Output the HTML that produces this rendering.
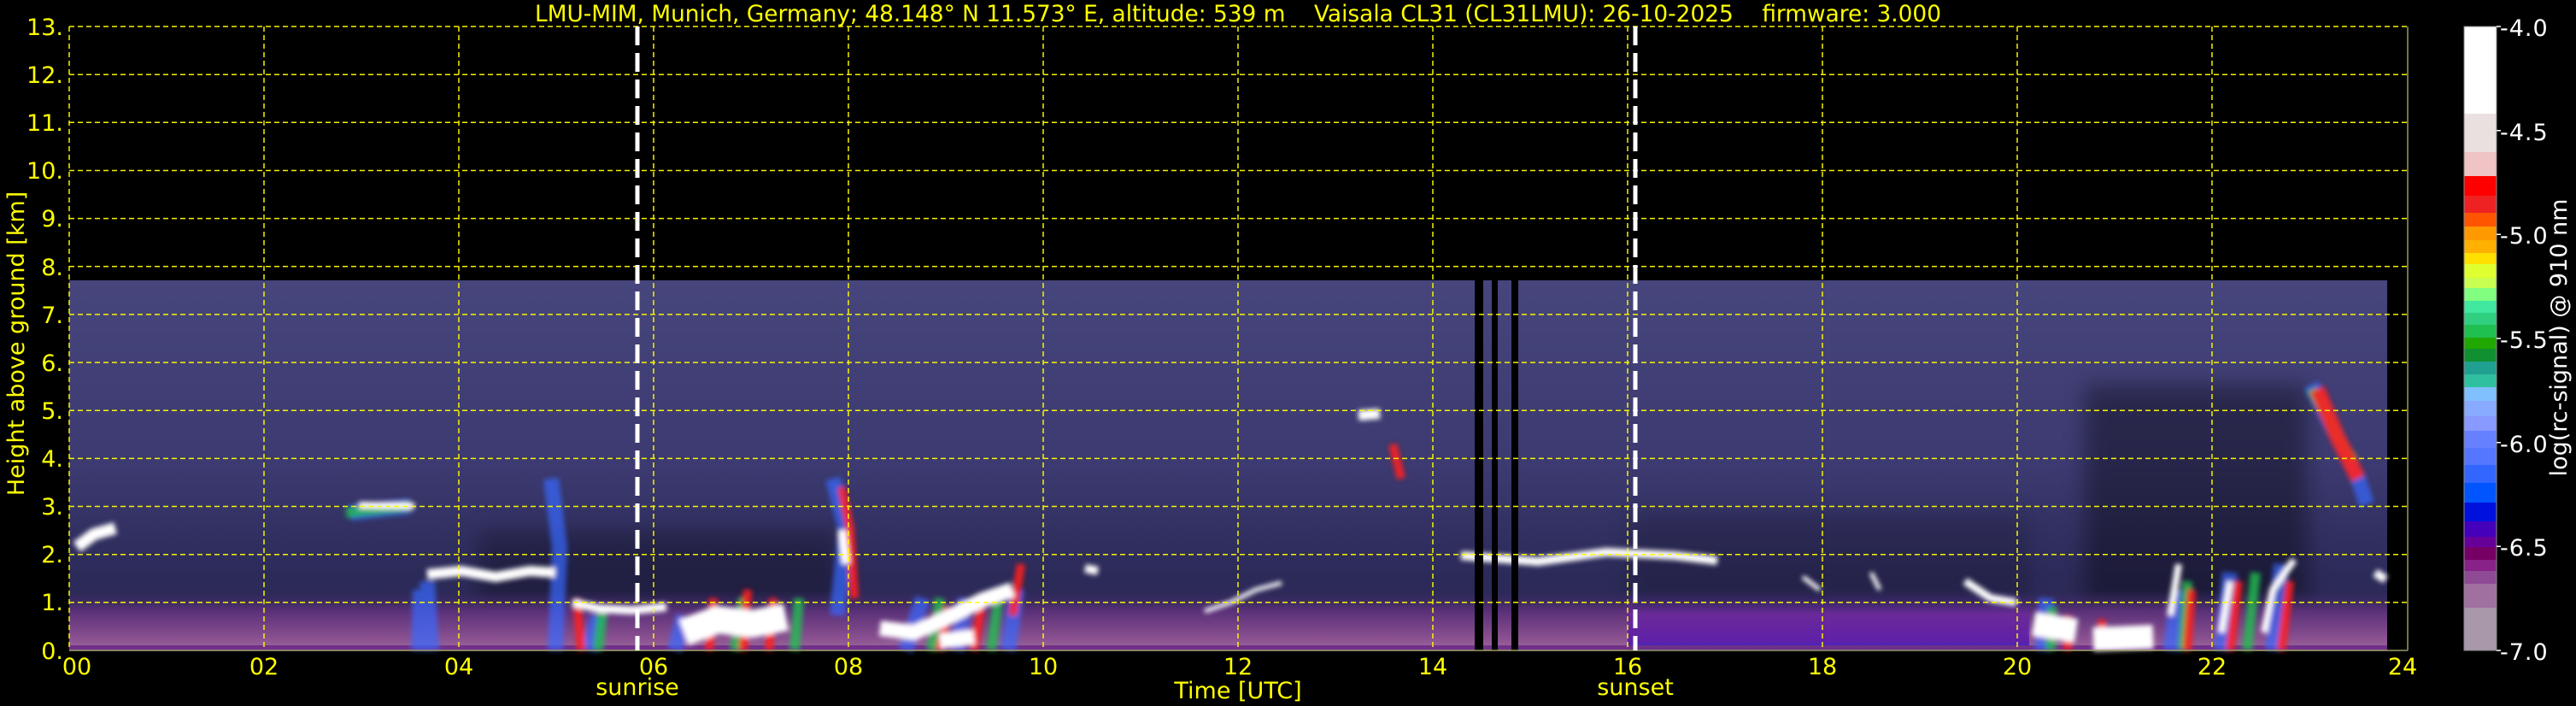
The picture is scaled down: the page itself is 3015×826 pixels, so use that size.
<!DOCTYPE html>
<html><head><meta charset="utf-8"><style>
html,body{margin:0;padding:0;background:#000;width:3015px;height:826px;overflow:hidden}
svg{display:block}
text{font-family:"DejaVu Sans","Liberation Sans",sans-serif}
</style></head><body>
<svg width="3015" height="826" viewBox="0 0 3015 826" xmlns="http://www.w3.org/2000/svg">
<defs>
<linearGradient id="bg" x1="0" y1="328" x2="0" y2="761" gradientUnits="userSpaceOnUse">
<stop offset="0" stop-color="#46457c"/>
<stop offset="0.5" stop-color="#3c3a70"/>
<stop offset="0.8" stop-color="#2c2a58"/>
<stop offset="1" stop-color="#2c2a58"/>
</linearGradient>
<linearGradient id="bot" x1="0" y1="0" x2="0" y2="1">
<stop offset="0" stop-color="#3a2a60" stop-opacity="0"/>
<stop offset="0.35" stop-color="#5a3078"/>
<stop offset="0.8" stop-color="#8a5090"/>
<stop offset="1" stop-color="#9a6a9a"/>
</linearGradient>
<linearGradient id="bot2" x1="0" y1="0" x2="0" y2="1">
<stop offset="0" stop-color="#3a2a70" stop-opacity="0"/>
<stop offset="0.4" stop-color="#6a2a98"/>
<stop offset="0.85" stop-color="#6020a8"/>
<stop offset="1" stop-color="#2a30d0"/>
</linearGradient>
<linearGradient id="cb" x1="0" y1="31" x2="0" y2="761" gradientUnits="userSpaceOnUse">
<stop offset="0" stop-color="#fff"/><stop offset="0.1397" stop-color="#fff"/>
<stop offset="0.1397" stop-color="#ebe0e0"/><stop offset="0.2014" stop-color="#ebe0e0"/>
<stop offset="0.2014" stop-color="#f0c4c4"/><stop offset="0.2397" stop-color="#f0c4c4"/>
<stop offset="0.2397" stop-color="#ff0000"/><stop offset="0.2712" stop-color="#ff0000"/>
<stop offset="0.2712" stop-color="#ee2222"/><stop offset="0.2986" stop-color="#ee2222"/>
<stop offset="0.2986" stop-color="#ff5500"/><stop offset="0.3205" stop-color="#ff5500"/>
<stop offset="0.3205" stop-color="#ff9900"/><stop offset="0.3425" stop-color="#ff9900"/>
<stop offset="0.3425" stop-color="#ffb000"/><stop offset="0.3630" stop-color="#ffb000"/>
<stop offset="0.3630" stop-color="#ffe000"/><stop offset="0.3808" stop-color="#ffe000"/>
<stop offset="0.3808" stop-color="#e0ff30"/><stop offset="0.4027" stop-color="#e0ff30"/>
<stop offset="0.4027" stop-color="#c8ff50"/><stop offset="0.4192" stop-color="#c8ff50"/>
<stop offset="0.4192" stop-color="#80ff80"/><stop offset="0.4397" stop-color="#80ff80"/>
<stop offset="0.4397" stop-color="#40e8a0"/><stop offset="0.4589" stop-color="#40e8a0"/>
<stop offset="0.4589" stop-color="#30d080"/><stop offset="0.4781" stop-color="#30d080"/>
<stop offset="0.4781" stop-color="#20c050"/><stop offset="0.4986" stop-color="#20c050"/>
<stop offset="0.4986" stop-color="#20a800"/><stop offset="0.5164" stop-color="#20a800"/>
<stop offset="0.5164" stop-color="#109030"/><stop offset="0.5370" stop-color="#109030"/>
<stop offset="0.5370" stop-color="#20a090"/><stop offset="0.5575" stop-color="#20a090"/>
<stop offset="0.5575" stop-color="#30c0a0"/><stop offset="0.5781" stop-color="#30c0a0"/>
<stop offset="0.5781" stop-color="#80c0ff"/><stop offset="0.6000" stop-color="#80c0ff"/>
<stop offset="0.6000" stop-color="#88aaff"/><stop offset="0.6247" stop-color="#88aaff"/>
<stop offset="0.6247" stop-color="#8899ff"/><stop offset="0.6479" stop-color="#8899ff"/>
<stop offset="0.6479" stop-color="#6680ff"/><stop offset="0.6753" stop-color="#6680ff"/>
<stop offset="0.6753" stop-color="#5577ff"/><stop offset="0.7027" stop-color="#5577ff"/>
<stop offset="0.7027" stop-color="#3366ff"/><stop offset="0.7315" stop-color="#3366ff"/>
<stop offset="0.7315" stop-color="#0055ff"/><stop offset="0.7630" stop-color="#0055ff"/>
<stop offset="0.7630" stop-color="#0011dd"/><stop offset="0.7932" stop-color="#0011dd"/>
<stop offset="0.7932" stop-color="#4400bb"/><stop offset="0.8178" stop-color="#4400bb"/>
<stop offset="0.8178" stop-color="#660099"/><stop offset="0.8342" stop-color="#660099"/>
<stop offset="0.8342" stop-color="#770066"/><stop offset="0.8548" stop-color="#770066"/>
<stop offset="0.8548" stop-color="#882288"/><stop offset="0.8726" stop-color="#882288"/>
<stop offset="0.8726" stop-color="#8e4a94"/><stop offset="0.8932" stop-color="#8e4a94"/>
<stop offset="0.8932" stop-color="#a070a0"/><stop offset="0.9315" stop-color="#a070a0"/>
<stop offset="0.9315" stop-color="#a898aa"/><stop offset="1" stop-color="#a898aa"/>
</linearGradient>
<filter id="b"><feGaussianBlur stdDeviation="3"/></filter>
<filter id="b2"><feGaussianBlur stdDeviation="12"/></filter>
</defs>

<!-- data background -->
<rect x="81" y="328" width="2713" height="433" fill="url(#bg)"/>
<g filter="url(#b2)">
<rect x="560" y="620" width="420" height="90" fill="#000" opacity="0.25"/>
<rect x="1905" y="600" width="470" height="110" fill="#000" opacity="0.15"/>
<rect x="2440" y="450" width="260" height="260" fill="#000" opacity="0.35"/>
</g>
<!-- bottom aerosol layer -->
<rect x="81" y="690" width="1830" height="71" fill="url(#bot)"/>
<rect x="1905" y="690" width="470" height="71" fill="url(#bot2)"/>
<rect x="2375" y="690" width="419" height="71" fill="url(#bot)"/>
<rect x="81" y="755" width="2713" height="5" fill="#70308a"/>

<!-- clouds -->
<g stroke-linejoin="round" stroke-linecap="butt" fill="none" filter="url(#b)">
<g stroke="#3a6aff" stroke-width="18" opacity="0.7">
<path d="M410 600 L480 592"/>
<path d="M490 761 L492 690 M505 761 L500 680"/>
<path d="M650 761 L655 640 L645 560"/>
<path d="M690 761 L700 720 M790 761 L800 720"/>
<path d="M980 720 L990 620 L975 560"/>
<path d="M1060 761 L1080 700 M1120 761 L1130 700 M1180 761 L1190 690"/>
<path d="M2390 761 L2395 700 M2540 761 L2550 690 M2600 761 L2610 670 M2660 761 L2670 660"/>
<path d="M2705 450 L2730 500 L2760 560 L2770 590"/>
</g>
<g stroke="#20c050" stroke-width="12" opacity="0.8">
<path d="M405 600 L480 592"/>
<path d="M700 761 L705 715"/>
<path d="M860 761 L870 700 M930 761 L935 700"/>
<path d="M1090 761 L1100 700 M1160 761 L1170 690"/>
<path d="M2400 761 L2402 710 M2555 761 L2560 680 M2630 761 L2640 670"/>
<path d="M2705 455 L2730 500 L2755 540"/>
</g>
<g stroke="#ff2020" stroke-width="10" opacity="0.9">
<path d="M680 761 L675 700 M830 761 L835 700 M900 761 L905 700 M870 761 L875 690"/>
<path d="M1000 700 L995 620 L985 570"/>
<path d="M1100 761 L1110 710 M1140 761 L1150 700 M1185 720 L1195 660"/>
<path d="M2420 761 L2420 720 M2460 761 L2460 725 M2560 761 L2565 690 M2610 761 L2620 680 M2670 761 L2680 680"/>
<path d="M2712 455 L2735 510 L2760 560" stroke-width="18"/>
<path d="M1630 520 L1640 560"/>
</g>
<g stroke="#ffffff">
<path d="M90 640 L110 625 L135 618" stroke-width="14"/>
<path d="M420 591 L485 592" stroke-width="8"/>
<path d="M500 672 L540 668 L580 675 L620 668 L650 670" stroke-width="12"/>
<path d="M670 705 L700 712 L740 714 L780 710" stroke-width="10"/>
<path d="M800 740 L840 725 L880 730 L920 722" stroke-width="32"/>
<path d="M985 620 L990 660" stroke-width="10"/>
<path d="M1030 735 L1070 740 L1110 722 L1150 702 L1185 690" stroke-width="18"/>
<path d="M1100 750 L1140 745" stroke-width="18"/>
<path d="M1270 665 L1285 668" stroke-width="10"/>
<path d="M1410 715 L1440 705 L1470 690 L1500 682" stroke-width="5"/>
<path d="M1590 486 L1615 484" stroke-width="12"/>
<path d="M1710 650 L1800 657 L1880 646 L1960 650 L2010 656" stroke-width="10"/>
<path d="M2110 675 L2130 690 M2190 670 L2200 690" stroke-width="5"/>
<path d="M2300 680 L2330 700 L2360 705" stroke-width="9"/>
<path d="M2380 730 L2430 738 M2450 748 L2520 745" stroke-width="28"/>
<path d="M2540 720 L2550 660 M2600 740 L2610 680 M2650 740 L2660 690 L2685 655" stroke-width="8"/>
<path d="M2780 670 L2792 678" stroke-width="10"/>
</g>
</g>

<!-- data gaps -->
<rect x="1726" y="328" width="10" height="433" fill="#000"/>
<rect x="1746" y="328" width="7" height="433" fill="#000"/>
<rect x="1769" y="328" width="8" height="433" fill="#000"/>

<!-- grid -->
<g stroke="#ffff00" stroke-width="1.5" stroke-dasharray="6,4" opacity="0.95">
<path d="M81 31H2818 M81 87.2H2818 M81 143.3H2818 M81 199.5H2818 M81 255.6H2818 M81 311.8H2818 M81 367.9H2818 M81 424.1H2818 M81 480.2H2818 M81 536.4H2818 M81 592.5H2818 M81 648.7H2818 M81 704.8H2818"/>
<path d="M81 31V761 M309 31V761 M537 31V761 M765 31V761 M993 31V761 M1221 31V761 M1449 31V761 M1677 31V761 M1905 31V761 M2133 31V761 M2361 31V761 M2589 31V761"/>
</g>
<path d="M2818 31V761" stroke="#999966" stroke-width="1.5"/>
<path d="M81 761H2818" stroke="#999966" stroke-width="1.5"/>

<!-- sunrise / sunset -->
<g stroke="#fff" stroke-width="5" stroke-dasharray="22,9">
<path d="M746 31V761"/><path d="M1914 31V761"/>
</g>

<!-- title -->
<text x="626" y="25" font-size="27" fill="#ffff00" textLength="1646" lengthAdjust="spacingAndGlyphs">LMU-MIM, Munich, Germany; 48.148° N 11.573° E, altitude: 539 m&#160;&#160;&#160;&#160;Vaisala CL31 (CL31LMU): 26-10-2025&#160;&#160;&#160;&#160;firmware: 3.000</text>

<!-- y tick labels -->
<g font-size="27" fill="#ffff00" text-anchor="end">
<text x="74" y="41">13.</text><text x="74" y="97">12.</text><text x="74" y="153">11.</text>
<text x="74" y="209">10.</text><text x="74" y="265">9.</text><text x="74" y="322">8.</text>
<text x="74" y="378">7.</text><text x="74" y="434">6.</text><text x="74" y="490">5.</text>
<text x="74" y="546">4.</text><text x="74" y="602">3.</text><text x="74" y="658">2.</text>
<text x="74" y="714">1.</text><text x="74" y="771">0.</text>
</g>
<text transform="translate(28,402) rotate(-90)" font-size="27" fill="#ffff00" text-anchor="middle">Height above ground [km]</text>

<!-- x tick labels -->
<g font-size="27" fill="#ffff00" text-anchor="middle">
<text x="90" y="789">00</text><text x="309" y="789">02</text><text x="537" y="789">04</text>
<text x="765" y="789">06</text><text x="993" y="789">08</text><text x="1221" y="789">10</text>
<text x="1449" y="789">12</text><text x="1677" y="789">14</text><text x="1905" y="789">16</text>
<text x="2133" y="789">18</text><text x="2361" y="789">20</text><text x="2589" y="789">22</text>
<text x="2812" y="789">24</text>
<text x="746" y="813">sunrise</text><text x="1914" y="813">sunset</text>
<text x="1449" y="817">Time [UTC]</text>
</g>

<!-- colorbar -->
<rect x="2884" y="31" width="38" height="730" fill="url(#cb)" stroke="#888" stroke-width="1"/>
<g font-size="27" fill="#fff" letter-spacing="1">
<text x="2926" y="42">-4.0</text><text x="2926" y="164">-4.5</text><text x="2926" y="285">-5.0</text>
<text x="2926" y="407">-5.5</text><text x="2926" y="529">-6.0</text><text x="2926" y="650">-6.5</text>
<text x="2926" y="772">-7.0</text>
</g>
<g stroke="#fff" stroke-width="1.5">
<path d="M2922 31h5 M2922 152.7h5 M2922 274.3h5 M2922 396h5 M2922 517.7h5 M2922 639.3h5 M2922 761h5"/>
</g>
<text transform="translate(3004,395) rotate(-90)" font-size="27" fill="#fff" text-anchor="middle">log(rc-signal) @ 910 nm</text>
</svg>
</body></html>
